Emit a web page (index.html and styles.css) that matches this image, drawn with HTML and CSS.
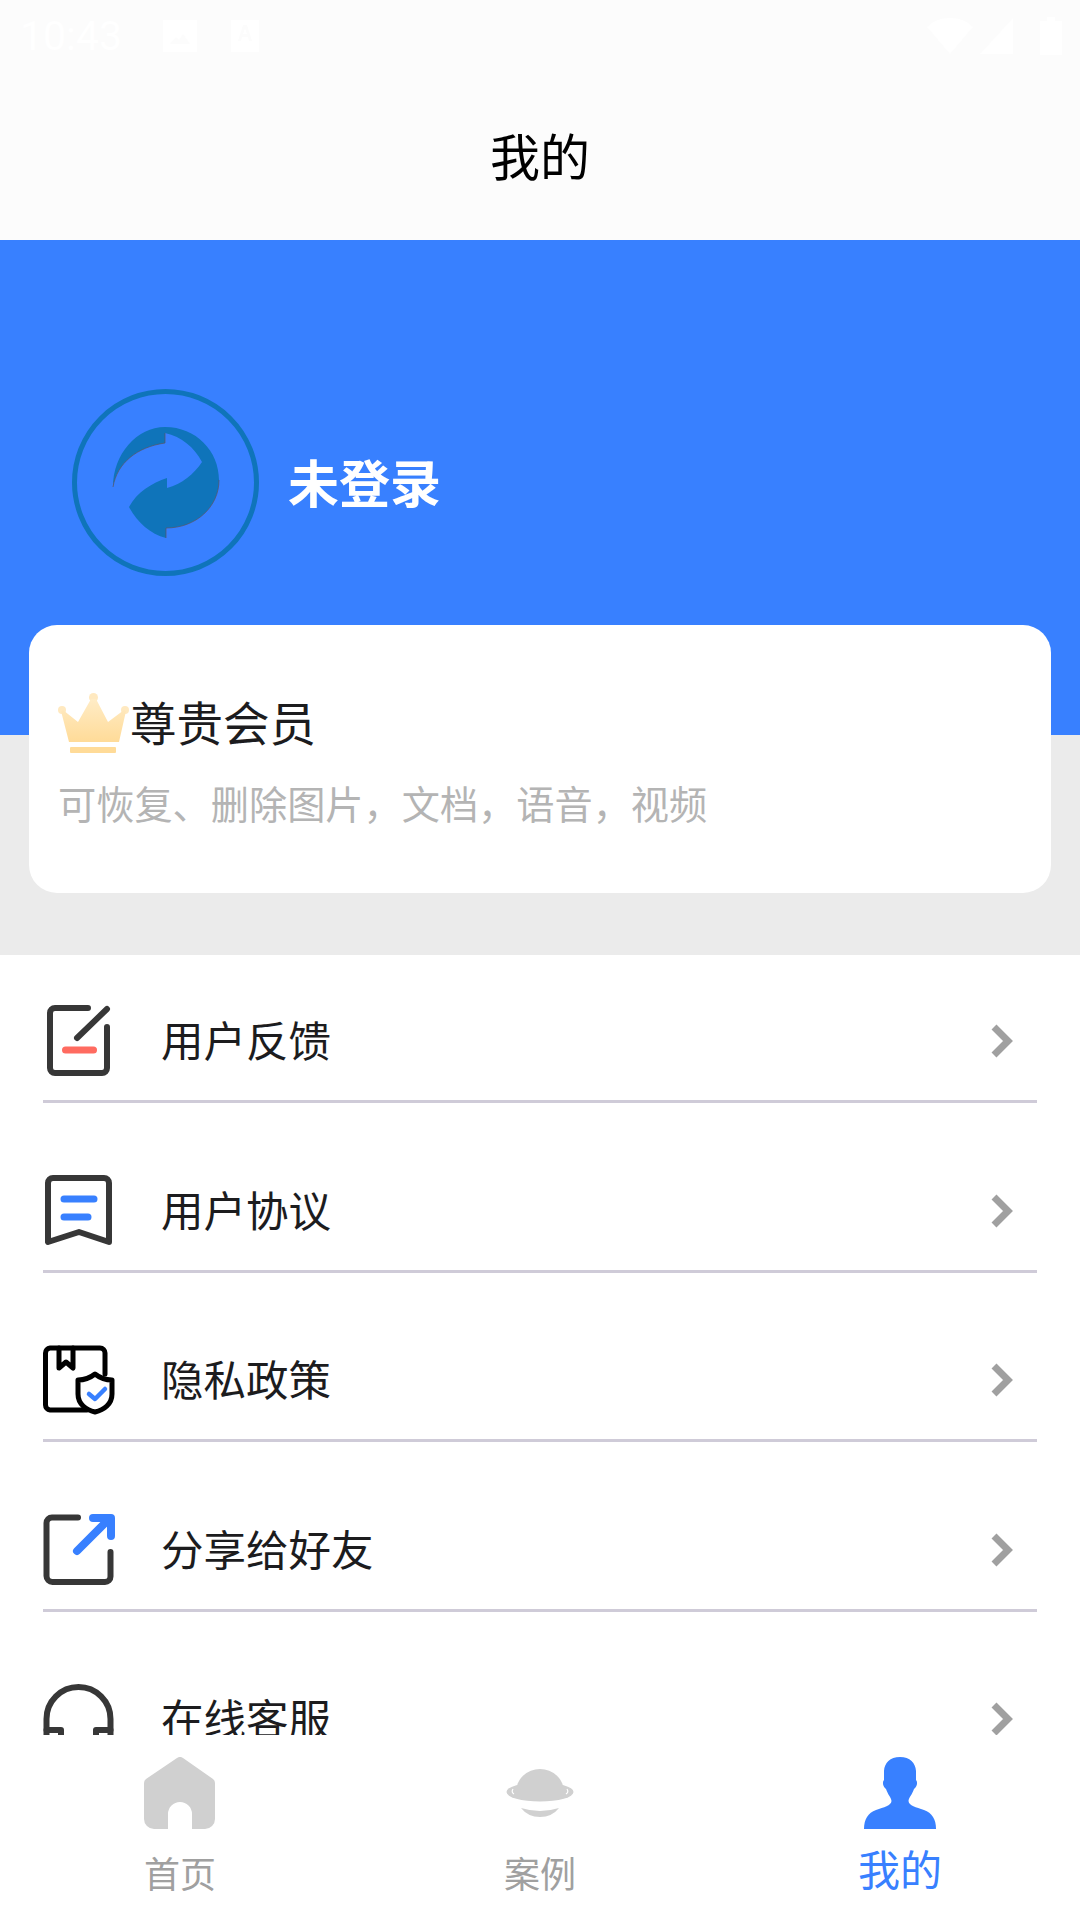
FILE: index.html
```html
<!DOCTYPE html>
<html lang="zh-CN">
<head>
	<meta charset="UTF-8">
	<title>我的</title>
	<link rel="stylesheet" href="styles.css">
</head>
<body>
	<div class="screen">
		<header class="header">
			<div class="status-bar">
				<span class="status-time">10:43</span>
				<svg class="status-pic" width="34" height="32" viewBox="0 0 34 32"><path fill="#fff" fill-rule="evenodd" d="M0 0H34V32H0ZM7 24H27L20 14 16 20 13 17Z"/></svg>
				<svg class="status-doc" width="28" height="32" viewBox="0 0 28 32"><path fill="#fff" fill-rule="evenodd" d="M0 0H28V32H0ZM12 5 7 21H10L11 17H17L18 21H21L16 5ZM12 14 14 8 16 14Z"/></svg>
				<span class="status-gap"></span>
				<svg width="46" height="36" viewBox="0 0 46 36"><path fill="#fff" d="M23 36 0 9C6 3 14 0 23 0S40 3 46 9Z"/></svg>
				<svg class="status-signal" width="33" height="36" viewBox="0 0 33 36"><path fill="#fff" d="M33 0V36H0Z"/></svg>
				<svg class="status-battery" width="22" height="38" viewBox="0 0 22 38"><path fill="#fff" d="M7 0H15V4H22V38H0V4H7Z"/></svg>
			</div>
			<h1 class="title">我的</h1>
		</header>

		<main class="content">
			<section class="top">
				<div class="profile">
					<svg class="avatar" width="187" height="187" viewBox="0 0 187 187">
						<circle cx="93.5" cy="93.5" r="91" fill="none" stroke="#0f74ba" stroke-width="5"/>
						<path fill="#0f74ba" d="M41 98C41 65 65 38 93 38C124 38 147 62 147 91C147 118 124 139 94 139V149C78 145 65 133 57 118C65 103 80 94 95 89V99C110 95 122 85 130 73C122 58 110 48 93 44V54C65 58 45 74 41 98Z"/>
						<path fill="none" stroke="#5b5560" stroke-width=".7" d="M41 98C45 74 65 58 93 54V44M147 91C147 118 124 139 94 139V149"/>
					</svg>
					<span class="username">未登录</span>
				</div>
				<div class="vip-card">
					<div class="vip-head">
						<svg width="72" height="60" viewBox="0 0 72 60">
							<defs>
								<linearGradient id="crown" x1="0" y1="0" x2="0" y2="1">
									<stop offset="0" stop-color="#ffecc6"/>
									<stop offset="1" stop-color="#ffdb98"/>
								</linearGradient>
							</defs>
							<circle cx="35.500" cy="4.500" r="4.500" fill="#ffe9c0"/>
							<circle cx="4" cy="17" r="4" fill="#ffe9c0"/>
							<circle cx="67" cy="17" r="4" fill="#ffe9c0"/>
							<path fill="url(#crown)" d="M11 49 3 18 5 17 20 29 33 6H38L50 29 66 17 68 18 61 49Z"/>
							<rect x="12" y="54" width="46" height="6" rx="1" fill="#ffdb98"/>
						</svg>
						<span class="vip-title">尊贵会员</span>
					</div>
					<p class="vip-desc">可恢复、删除图片，文档，语音，视频</p>
				</div>
			</section>

			<ul class="menu">
				<li class="menu-item">
					<svg class="menu-icon" width="72" height="72" viewBox="0 0 72 72">
						<path class="line-dark" d="M45 3H12A5 5 0 0 0 7 8V63A5 5 0 0 0 12 68H59A5 5 0 0 0 64 63V22"/>
						<path class="line-dark" d="M34 33 64 4"/>
						<path fill="none" stroke="#ff6b60" stroke-width="7" stroke-linecap="round" d="M22.500 45H50.500"/>
					</svg>
					<span class="menu-text">用户反馈</span>
					<svg class="chevron" width="24" height="36" viewBox="0 0 24 36"><path d="M4 4 18 18 4 32"/></svg>
				</li>
				<li class="menu-item">
					<svg class="menu-icon" width="72" height="72" viewBox="0 0 72 72">
						<path class="line-dark" d="M5 8A5 5 0 0 1 10 3H61A5 5 0 0 1 66 8V67L36 57 5 67Z"/>
						<path class="line-blue" d="M21 24H51M21 42H45"/>
					</svg>
					<span class="menu-text">用户协议</span>
					<svg class="chevron" width="24" height="36" viewBox="0 0 24 36"><path d="M4 4 18 18 4 32"/></svg>
				</li>
				<li class="menu-item">
					<svg class="menu-icon" width="72" height="72" viewBox="0 0 72 72">
						<path class="line-black" d="M62 30V9A5 5 0 0 0 57 4H7A5 5 0 0 0 2.500 9V61A5 5 0 0 0 7 66H44"/>
						<path class="line-black" d="M16 4V24L23 18 30 24V4"/>
						<path class="line-black" d="M52 30C57 34 62 36 69 36V50C69 60 61 66 52 68C43 66 35 60 35 50V36C42 36 47 34 52 30Z"/>
						<path class="line-blue line-thin" d="M46 50 52 55 62 45"/>
					</svg>
					<span class="menu-text">隐私政策</span>
					<svg class="chevron" width="24" height="36" viewBox="0 0 24 36"><path d="M4 4 18 18 4 32"/></svg>
				</li>
				<li class="menu-item">
					<svg class="menu-icon" width="72" height="72" viewBox="0 0 72 72">
						<path class="line-dark" d="M35 3.500H9A5.500 5.500 0 0 0 3.500 9V62A6 6 0 0 0 9.500 68H62A5.500 5.500 0 0 0 67.500 62.500V38"/>
						<path class="line-blue line-wide" d="M34 37 66 5M50 4H68V22"/>
					</svg>
					<span class="menu-text">分享给好友</span>
					<svg class="chevron" width="24" height="36" viewBox="0 0 24 36"><path d="M4 4 18 18 4 32"/></svg>
				</li>
				<li class="menu-item">
					<svg class="menu-icon" width="72" height="72" viewBox="0 0 72 72">
						<path class="line-dark" d="M3.500 60V36A32 32 0 0 1 67.500 36V60"/>
						<path class="line-dark" d="M3.500 47H18V70M67.500 47H53V70"/>
					</svg>
					<span class="menu-text">在线客服</span>
					<svg class="chevron" width="24" height="36" viewBox="0 0 24 36"><path d="M4 4 18 18 4 32"/></svg>
				</li>
			</ul>
		</main>

		<nav class="tabbar">
			<div class="tab">
				<svg width="72" height="72" viewBox="0 0 72 72"><path fill="#d0d0d0" d="M33 1A5 5 0 0 1 39 1L69 22A5 5 0 0 1 71 26V62A10 10 0 0 1 61 72H48V57A12 12 0 0 0 24 57V72H10A10 10 0 0 1 0 62V26A5 5 0 0 1 2 22Z"/></svg>
				<span class="tab-label">首页</span>
			</div>
			<div class="tab">
				<svg width="72" height="72" viewBox="0 0 72 72">
					<ellipse cx="36" cy="35" rx="33.500" ry="9.500" fill="#d0d0d0"/>
					<path fill="#d0d0d0" d="M12 35A24 23 0 0 1 60 35Z"/>
					<path fill="none" stroke="#fff" stroke-width="1.200" d="M9 32Q7 35 10 37M63 32Q65 35 62 37"/>
					<path fill="#d0d0d0" d="M17 51Q36 57 55 51Q48 60 36 60Q24 60 17 51Z"/>
				</svg>
				<span class="tab-label">案例</span>
			</div>
			<div class="tab tab-active">
				<svg width="72" height="72" viewBox="0 0 72 72"><path fill="#3880ff" d="M36 0C46 0 51.500 6 52 14L52 23C54 25 53 30 50 32C48 38 45 40 44.500 44C45 49 52 50 60 53C68 56 72 62 72 72H0C0 62 4 56 12 53C20 50 27 49 27.500 44C27 40 24 38 22 32C19 30 18 25 20 23L20 14C20.500 6 26 0 36 0Z"/></svg>
				<span class="tab-label">我的</span>
			</div>
		</nav>
	</div>
</body>
</html>
```

FILE: styles.css
```css
html,body,h1,p,ul,li{
	padding: 0;
	margin: 0;
}
body{
	font-family: "Noto Sans CJK SC", "Noto Sans", sans-serif;
	background-color: #fff;
}
svg{
	display: block;
	flex-shrink: 0;
}
.screen{
	display: flex;
	flex-direction: column;
	width: 1080px;
	height: 1920px;
	overflow: hidden;
}

/* header */
.header{
	flex: none;
	display: flex;
	flex-direction: column;
	height: 240px;
	background-color: #fcfcfc;
}
.status-bar{
	display: flex;
	align-items: center;
	height: 72px;
	padding: 0 18px 0 20px;
}
.status-time{
	width: 143px;
	font-family: Roboto, sans-serif;
	font-size: 41px;
	color: #fff;
}
.status-doc{
	margin-left: 34px;
}
.status-gap{
	flex: 1;
}
.status-signal{
	margin-left: 7px;
}
.status-battery{
	margin-left: 27px;
}
.title{
	flex: 1;
	display: flex;
	align-items: center;
	justify-content: center;
	padding-bottom: 4px;
	font-size: 50px;
	font-weight: normal;
	color: #000;
}

/* blue profile area + member card */
.content{
	flex: 1;
	min-height: 0;
	overflow: hidden;
}
.top{
	height: 715px;
	box-sizing: border-box;
	padding: 149px 29px 0;
	background: linear-gradient(#3880ff 495px, #ebebeb 495px);
}
.profile{
	display: flex;
	align-items: center;
	gap: 29px;
	padding-left: 43px;
}
.username{
	padding-bottom: 4px;
	font-size: 51px;
	font-weight: bold;
	color: #fff;
}
.vip-card{
	height: 268px;
	box-sizing: border-box;
	margin-top: 49px;
	padding: 68px 29px 0;
	border-radius: 28px;
	background-color: #fff;
}
.vip-head{
	display: flex;
	align-items: center;
	height: 60px;
}
.vip-title{
	padding-bottom: 5px;
	font-size: 46.500px;
	line-height: 55px;
	color: #1c1c1e;
}
.vip-desc{
	margin-top: 25px;
	font-size: 38.200px;
	line-height: 50px;
	color: #b4b4b4;
}

/* menu */
.menu{
	display: flex;
	flex-direction: column;
	gap: 48.5px;
	padding: 27px 43px 0;
	list-style: none;
}
.menu-item{
	display: flex;
	align-items: center;
	flex: none;
	height: 118px;
	border-bottom: 3px solid #cfcbd8;
	box-sizing: content-box;
}
.menu-text{
	flex: 1;
	margin-left: 46px;
	padding-bottom: 5px;
	font-size: 42.500px;
	color: #1c1c1e;
}
.chevron{
	margin-right: 23px;
}
.chevron path{
	fill: none;
	stroke: #a0a0a0;
	stroke-width: 7;
}
.line-dark,.line-black,.line-blue{
	fill: none;
	stroke-width: 6;
	stroke-linecap: round;
	stroke-linejoin: round;
}
.line-dark{
	stroke: #373737;
}
.line-black{
	stroke: #000;
	stroke-width: 5;
}
.line-blue{
	stroke: #3880ff;
	stroke-width: 7;
}
.line-thin{
	stroke-width: 4.500;
}
.line-wide{
	stroke-width: 8;
}

/* bottom tabs */
.tabbar{
	flex: none;
	display: flex;
	height: 185px;
	box-sizing: border-box;
	padding-top: 22px;
	background-color: #fff;
}
.tab{
	flex: 1;
	display: flex;
	flex-direction: column;
	align-items: center;
}
.tab-label{
	margin-top: 20px;
	font-size: 36px;
	line-height: 46px;
	color: #a0a0a0;
}
.tab-active .tab-label{
	margin-top: 13px;
	font-size: 42px;
	line-height: 52px;
	color: #3880ff;
}
```
